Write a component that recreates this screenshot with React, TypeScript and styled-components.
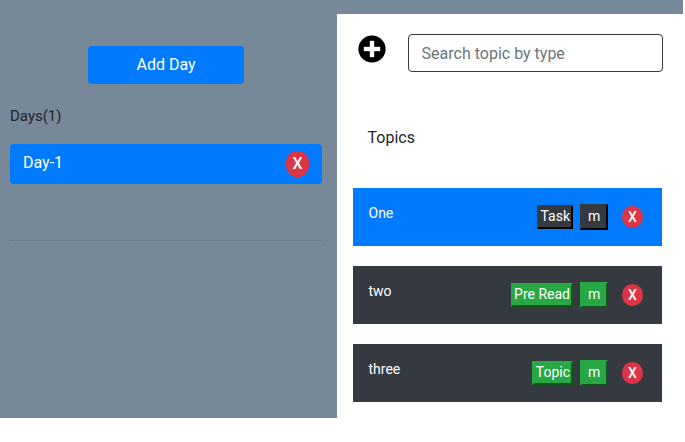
import React from "react";
import styled, { createGlobalStyle } from "styled-components";

const GlobalStyle = createGlobalStyle`
  * { box-sizing: border-box; }
  body {
    margin: 0;
    background: #fff;
    color: #212529;
    font: 400 16px/24px Roboto, "Liberation Sans", sans-serif;
  }
  button, input { font-family: inherit; }
`;

const Page = styled.div`
  width: 683px;
  height: 418px;
  padding-top: 14px;
  display: flex;
  background: #778899;
`;

const Sidebar = styled.aside`
  width: 337px;
  padding: 32px 15px 0 10px;
  display: flex;
  flex-direction: column;
`;

const AddDay = styled.button`
  align-self: center;
  width: 156px;
  height: 38px;
  padding: 0 6px 2px;
  border: 0;
  border-radius: 4px;
  background: #007bff;
  color: #fff;
  font-size: 16px;
`;

const DaysLabel = styled.div`
  margin-top: 20px;
  font-size: 15px;
`;

const DayItem = styled.div`
  margin-top: 16px;
  height: 40px;
  padding: 0 13px;
  display: flex;
  justify-content: space-between;
  align-items: center;
  border-radius: 4px;
  background: #007bff;
  color: #fff;
`;

const DayName = styled.span`
  margin-top: -2px;
`;

const RemoveDay = styled.button`
  width: 23px;
  height: 26px;
  padding: 0 0 1px;
  border: 0;
  border-radius: 12px;
  background: #dc3545;
  color: #fff;
  font-size: 16px;
  font-weight: 500;
`;

const Divider = styled.hr`
  width: 100%;
  margin: 56px 0 0;
  border: 0;
  border-top: 1px solid rgba(0, 0, 0, 0.1);
`;

const Main = styled.main`
  flex: 1;
  padding: 20px 20px 0 16px;
  background: #fff;
`;

const Toolbar = styled.div`
  display: flex;
  justify-content: space-between;
  padding-left: 5px;
`;

const AddTopic = styled.svg`
  width: 28px;
  height: 28px;
  margin-top: 1px;
`;

const Search = styled.input`
  width: 255px;
  height: 38px;
  padding: 6px 12px 6px 12.6px;
  border: 1px solid #343a40;
  border-radius: 4px;
  font-size: 16px;
  &::placeholder { color: #6c757d; opacity: 1; }
`;

const Heading = styled.div`
  margin: 54px 0 38px 14.5px;
`;

const TopicList = styled.div`
  width: 309px;
  display: flex;
  flex-direction: column;
  gap: 20px;
`;

const TopicRow = styled.div<{ $active?: boolean }>`
  height: 58px;
  padding: 0 19px 0 15.5px;
  display: flex;
  align-items: center;
  background: ${(p) => (p.$active ? "#007bff" : "#343a40")};
  color: #fff;
  font-size: 14px;
`;

const TopicName = styled.span`
  flex: 1;
  margin-top: -8px;
`;

const Tag = styled.button<{ $dark?: boolean; $small?: boolean }>`
  width: ${(p) => (p.$small ? "28px" : "auto")};
  height: ${(p) => (p.$small ? "26px" : "24px")};
  margin-right: ${(p) => (p.$small ? "14px" : "7px")};
  padding: 0 1px 2px 1.4px;
  border: 2px solid;
  border-color: ${(p) =>
    p.$dark ? "#343a40 #000 #000 #343a40" : "#28a745 #14541f #14541f #28a745"};
  background: ${(p) => (p.$dark ? "#343a40" : "#28a745")};
  color: #fff;
  font-size: 14px;
  line-height: 18px;
`;

const RemoveTopic = styled.button`
  width: 21px;
  height: 22px;
  padding: 0 0 1px;
  border: 0;
  border-radius: 11px;
  background: #dc3545;
  color: #fff;
  font-size: 14px;
  font-weight: 500;
`;

const topics = [
  { name: "One", type: "Task", active: true },
  { name: "two", type: "Pre Read", active: false },
  { name: "three", type: "Topic", active: false },
];

export default function App() {
  return (
    <>
      <GlobalStyle />
      <Page>
        <Sidebar>
          <AddDay>Add Day</AddDay>
          <DaysLabel>Days(1)</DaysLabel>
          <DayItem>
            <DayName>Day-1</DayName>
            <RemoveDay>X</RemoveDay>
          </DayItem>
          <Divider />
        </Sidebar>
        <Main>
          <Toolbar>
            <AddTopic viewBox="0 0 28 28" role="img" aria-label="Add topic">
              <circle cx="14" cy="14" r="13.6" fill="#000" />
              <path d="M12 6h4v6h6v4h-6v6h-4v-6H6v-4h6z" fill="#fff" stroke="#fff" strokeWidth="0.4" strokeLinejoin="round" />
            </AddTopic>
            <Search placeholder="Search topic by type" />
          </Toolbar>
          <Heading>Topics</Heading>
          <TopicList>
            {topics.map((t) => (
              <TopicRow key={t.name} $active={t.active}>
                <TopicName>{t.name}</TopicName>
                <Tag $dark={t.active}>{t.type}</Tag>
                <Tag $dark={t.active} $small>m</Tag>
                <RemoveTopic>X</RemoveTopic>
              </TopicRow>
            ))}
          </TopicList>
        </Main>
      </Page>
    </>
  );
}
